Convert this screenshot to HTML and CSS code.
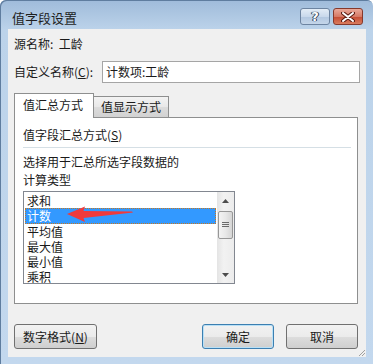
FILE: index.html
```html
<!DOCTYPE html>
<html lang="zh-CN">
<head>
    <meta charset="UTF-8">
    <title>值字段设置</title>
    <link rel="stylesheet" href="styles.css">
</head>
<body>
    <div class="window">
        <div class="title-bar">
            <span class="title">值字段设置</span>
            <div class="caption-buttons">
                <div class="cap-btn help-btn">?</div>
                <div class="cap-btn close-btn">
                    <svg width="14" height="10" viewBox="0 0 14 10">
                        <path d="M2 1 L12 9 M12 1 L2 9" stroke="#5a1a10" stroke-width="4" stroke-linecap="round"/>
                        <path d="M2 1 L12 9 M12 1 L2 9" stroke="#fff" stroke-width="2" stroke-linecap="round"/>
                    </svg>
                </div>
            </div>
        </div>
        <div class="client">
            <div class="src-row">源名称:&nbsp;&nbsp;工龄</div>
            <div class="name-row">
                <label class="name-label">自定义名称(<u>C</u>):</label>
                <div class="text-input">计数项:工龄</div>
            </div>
            <div class="tabs">
                <div class="tab active">值汇总方式</div>
                <div class="tab">值显示方式</div>
            </div>
            <div class="panel">
                <div class="group-title">值字段汇总方式(<u>S</u>)</div>
                <div class="separator"></div>
                <div class="hint">选择用于汇总所选字段数据的</div>
                <div class="hint second">计算类型</div>
                <div class="listbox">
                    <div class="items">
                        <div class="item">求和</div>
                        <div class="item selected">计数</div>
                        <div class="item">平均值</div>
                        <div class="item">最大值</div>
                        <div class="item">最小值</div>
                        <div class="item">乘积</div>
                    </div>
                    <div class="scrollbar">
                        <div class="sb-arrow">
                            <svg width="7" height="4" viewBox="0 0 7 4"><path d="M0 4 L3.5 0 L7 4 Z" fill="#4d4d4d"/></svg>
                        </div>
                        <div class="sb-thumb">
                            <svg width="7" height="6" viewBox="0 0 7 6"><path d="M0 0.5 H7 M0 2.5 H7 M0 4.5 H7" stroke="#6a6a6a" stroke-width="1"/></svg>
                        </div>
                        <div class="sb-track"></div>
                        <div class="sb-arrow">
                            <svg width="7" height="4" viewBox="0 0 7 4"><path d="M0 0 L7 0 L3.5 4 Z" fill="#4d4d4d"/></svg>
                        </div>
                    </div>
                    <!-- red annotation arrow -->
                    <svg class="mark-arrow" width="120" height="40" viewBox="0 0 120 40">
                        <path d="M44 23 L62 15.5 L60.5 20 L109 20.5 L110 21.5 L60.5 27 L62 31 Z" fill="#f03a3c"/>
                    </svg>
                </div>
            </div>
            <div class="button-row">
                <button class="btn wide">数字格式(<u>N</u>)</button>
                <div class="spacer"></div>
                <button class="btn default">确定</button>
                <button class="btn">取消</button>
            </div>
            <svg class="grip" width="9" height="9" viewBox="0 0 9 9">
                <path d="M8 2 L2 8 M8 5 L5 8" stroke="#a0a0a0" stroke-width="1"/>
            </svg>
        </div>
    </div>
</body>
</html>
```

FILE: styles.css
```css
body {
    margin: 0;
    background: #ffffff;
    font-family: "Noto Sans CJK SC", "Microsoft YaHei", sans-serif;
    font-size: 12px;
    color: #1a1a1a;
}
u {
    text-decoration: underline;
    text-underline-offset: 1px;
}
.window {
    width: 373px;
    height: 364px;
    display: flex;
    flex-direction: column;
    background: linear-gradient(#9fbbda, #bcd3ea 30px, #c3d8ee);
    border-radius: 6px 6px 0 0;
    box-shadow: inset 1px 1px 0 #5f7d9f;
}
.title-bar {
    height: 29px;
    display: flex;
    align-items: flex-start;
    padding-left: 12px;
    flex-shrink: 0;
}
.title {
    font-size: 13px;
    line-height: 14px;
    margin-top: 11px;
    color: #1e1e1e;
}
.caption-buttons {
    margin-left: auto;
    margin-right: 10px;
    margin-top: 8px;
    display: flex;
    gap: 3px;
}
.cap-btn {
    width: 30px;
    height: 17px;
    box-sizing: border-box;
    border: 1px solid #6d84a1;
    border-radius: 3px;
    display: flex;
    align-items: center;
    justify-content: center;
}
.help-btn {
    background: linear-gradient(#e3ecf6, #c9d9ec 50%, #b2c7e0 51%, #c4d6ea);
    color: #ffffff;
    font-family: "DejaVu Sans", sans-serif;
    font-weight: bold;
    font-size: 13px;
    text-shadow: 0 0 1px #2c3f58, 0 0 1px #2c3f58, 1px 0 0 #2c3f58, -1px 0 0 #2c3f58;
}
.close-btn {
    border-color: #86392c;
    background: linear-gradient(#eaa99a, #d67a66 50%, #c44a32 51%, #d97c5e);
}
.client {
    flex: 1;
    margin: 0 7px 7px 8px;
    background: #f0f0f0;
    display: flex;
    flex-direction: column;
    position: relative;
}
.src-row {
    padding: 8px 0 0 6px;
    line-height: 14px;
}
.name-row {
    margin-top: 10px;
    display: flex;
    align-items: center;
    padding-left: 6px;
}
.name-label {
    width: 88px;
    line-height: 14px;
}
.text-input {
    width: 258px;
    height: 22px;
    box-sizing: border-box;
    border: 1px solid #a5a5a5;
    background: #ffffff;
    padding-left: 3px;
    line-height: 19px;
}
.tabs {
    margin: 10px 0 0 6px;
    height: 24px;
    display: flex;
    align-items: flex-end;
    position: relative;
    z-index: 1;
}
.tab {
    height: 21px;
    box-sizing: border-box;
    border: 1px solid #8e8f8f;
    border-bottom: none;
    padding: 0 7px;
    line-height: 20px;
    background: linear-gradient(#f3f3f3, #e8e8e8 50%, #dcdcdc 51%, #d2d2d2);
    margin-left: -1px;
}
.tab.active {
    height: 25px;
    margin-bottom: -1px;
    margin-left: 0;
    background: #ffffff;
    line-height: 22px;
    padding: 0 10px 0 8px;
}
.panel {
    width: 344px;
    height: 187px;
    margin-left: 6px;
    box-sizing: border-box;
    border: 1px solid #8e8f8f;
    background: #ffffff;
    padding-left: 8px;
}
.group-title {
    margin-top: 10px;
    line-height: 14px;
}
.separator {
    width: 328px;
    height: 1px;
    margin-top: 5px;
    background: #d5dfe5;
}
.hint {
    margin-top: 7px;
    line-height: 14px;
}
.hint.second {
    margin-top: 4px;
}
.listbox {
    position: relative;
    margin-top: 4px;
    width: 212px;
    height: 93px;
    box-sizing: border-box;
    border: 1px solid #828790;
    display: flex;
    overflow: hidden;
}
.items {
    flex: 1;
    padding: 1px 1px 0;
    overflow: hidden;
}
.item {
    height: 15px;
    line-height: 15px;
    padding-left: 2px;
    box-sizing: border-box;
}
.item.selected {
    height: 16px;
    line-height: 16px;
    background: #3399ff;
    color: #ffffff;
    outline: 1px dotted #c8781e;
    outline-offset: -1px;
}
.scrollbar {
    width: 17px;
    display: flex;
    flex-direction: column;
    background: linear-gradient(90deg, #e4e4e4, #f2f2f2 40%, #ececec);
}
.sb-arrow {
    height: 17px;
    display: flex;
    align-items: center;
    justify-content: center;
    flex-shrink: 0;
}
.sb-thumb {
    height: 28px;
    margin: 2px 1px 0;
    box-sizing: border-box;
    border: 1px solid #979797;
    border-radius: 2px;
    background: linear-gradient(90deg, #f3f3f3, #e8e8e8 50%, #d5d5d5);
    display: flex;
    align-items: center;
    justify-content: center;
}
.sb-track {
    flex: 1;
}
.mark-arrow {
    position: absolute;
    left: -1px;
    top: -1px;
}
.button-row {
    margin-top: 20px;
    padding: 0 8px 0 6px;
    display: flex;
    gap: 12px;
}
.spacer {
    flex: 1;
}
.btn {
    width: 72px;
    height: 25px;
    box-sizing: border-box;
    border: 1px solid #707070;
    border-radius: 3px;
    background: linear-gradient(#f2f2f2, #ebebeb 50%, #dddddd 51%, #cfcfcf);
    font-family: inherit;
    font-size: 12px;
    color: #1a1a1a;
    padding: 0;
    line-height: 22px;
}
.btn.wide {
    width: 83px;
}
.btn.default {
    border-color: #3c7fb1;
    box-shadow: inset 0 0 0 1px #b9e0f6;
}
.grip {
    position: absolute;
    right: 0;
    bottom: 0;
}
```
